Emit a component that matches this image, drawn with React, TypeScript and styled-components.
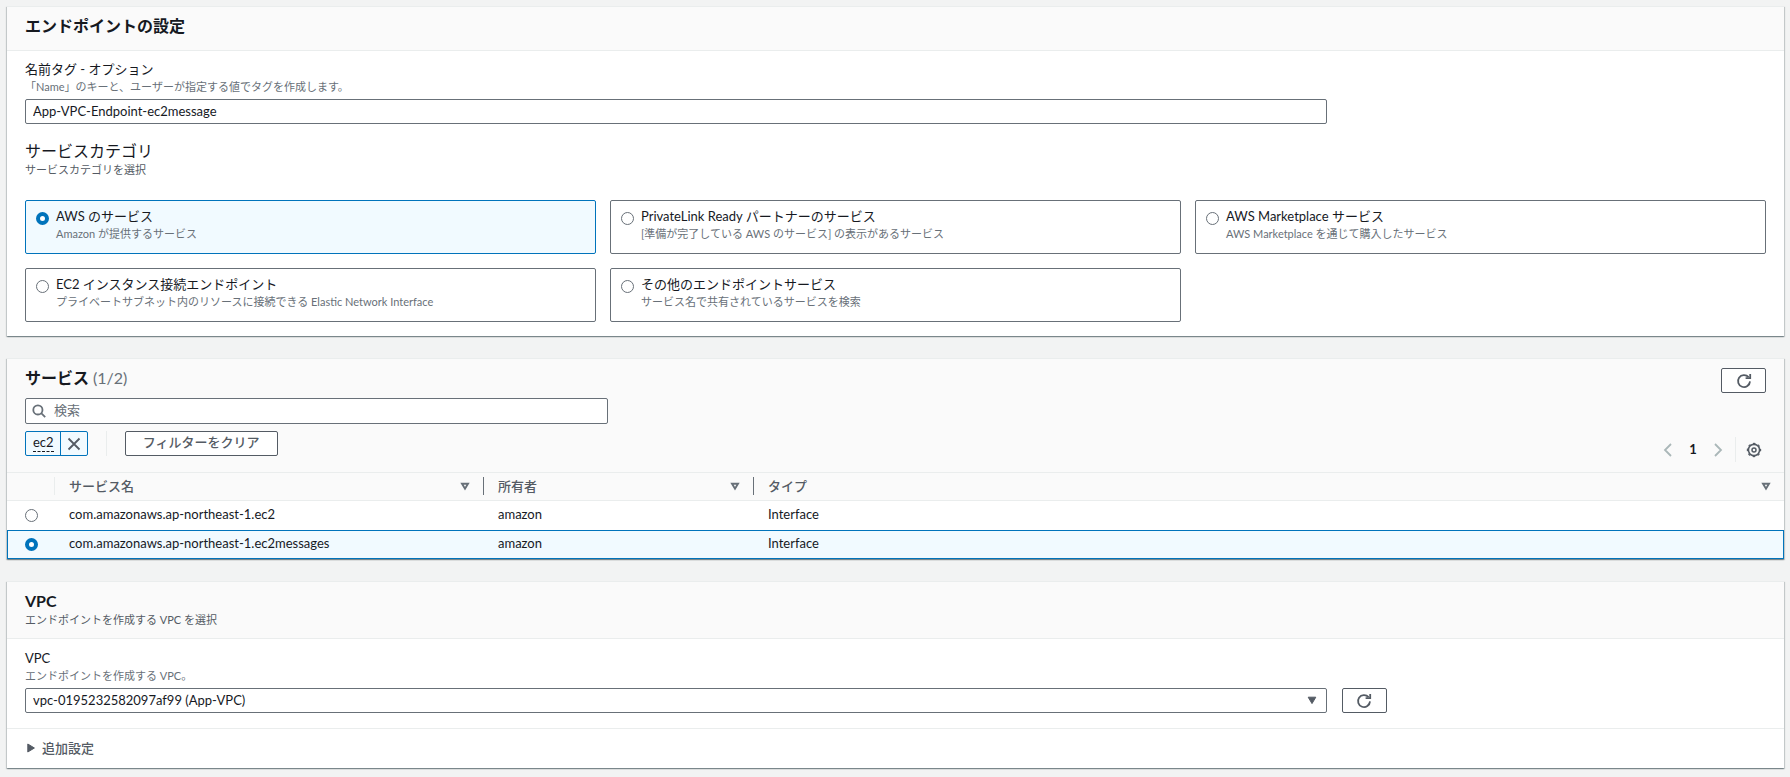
import React, { useState } from "react";
import styled, { createGlobalStyle } from "styled-components";

const GlobalStyle = createGlobalStyle`
  *, *::before, *::after { box-sizing: border-box; }
  body {
    margin: 0;
    background: #f2f3f3;
    color: #16191f;
    font-family: Lato, "Noto Sans CJK JP", sans-serif;
    font-size: 13px;
    line-height: 18px;
  }
  button, input, select { font: inherit; color: inherit; margin: 0; }
  h2, h3, p { margin: 0; }
`;

const Page = styled.main`
  display: flex;
  flex-direction: column;
  gap: 22px;
  padding: 6px 6px 8px 7px;
`;

const Panel = styled.section`
  background: #fff;
  border-top: 1px solid #eaeded;
  box-shadow: 0 1px 1px 0 rgba(0, 28, 36, 0.3), 1px 1px 1px 0 rgba(0, 28, 36, 0.15),
    -1px 1px 1px 0 rgba(0, 28, 36, 0.15);
`;

const PanelHeader = styled.header`
  min-height: 44px;
  padding: 8px 18px 10px;
  background: #fafafa;
  border-bottom: 1px solid #eaeded;
`;

const PanelTitle = styled.h2`
  font-size: 16px;
  line-height: 22px;
  font-weight: 700;
`;

const Counter = styled.span`
  color: #687078;
  font-weight: 400;
`;

const PanelBody = styled.div<{ $roomy?: boolean }>`
  padding: ${(p) => (p.$roomy ? "10px 18px 15px" : "9px 18px 14px")};
`;

const SubTitle = styled.h3`
  margin-top: 16px;
  font-size: 16px;
  line-height: 22px;
  font-weight: 400;
`;

const Hint = styled.p<{ $dark?: boolean }>`
  font-size: 11px;
  line-height: 16px;
  color: ${(p) => (p.$dark ? "#545b64" : "#687078")};
`;

const Field = styled.div`
  display: flex;
  flex-direction: column;
  gap: 1px;
`;

const FieldRow = styled.div`
  display: flex;
  gap: 15px;
  margin-top: 3px;
`;

const FieldSlot = styled.div`
  position: relative;
  width: calc(75% - 4px);
`;

const TextInput = styled.input`
  display: block;
  width: 100%;
  height: 25px;
  padding: 0 7px 2px;
  background: #fff;
  border: 1px solid #687078;
  border-radius: 2px;
`;

const Select = styled.select`
  display: block;
  width: 100%;
  height: 25px;
  padding: 0 28px 2px 7px;
  appearance: none;
  background: #fff;
  border: 1px solid #687078;
  border-radius: 2px;
`;

const SelectArrow = styled.svg`
  position: absolute;
  right: 10px;
  top: 8px;
  pointer-events: none;
`;

const Radio = styled.input.attrs({ type: "radio" })`
  appearance: none;
  display: block;
  flex: none;
  width: 13px;
  height: 13px;
  background: #fff;
  border: 1px solid #687078;
  border-radius: 50%;
  &:checked {
    border: 4px solid #0073bb;
  }
`;

const CardGrid = styled.div`
  display: grid;
  grid-template-columns: repeat(3, 1fr);
  gap: 14px;
  margin-top: 22px;
`;

const Card = styled.label<{ $selected: boolean }>`
  display: flex;
  gap: 7px;
  padding: 6px 10px 10px;
  background: ${(p) => (p.$selected ? "#f1faff" : "#fff")};
  border: 1px solid ${(p) => (p.$selected ? "#0073bb" : "#687078")};
  border-radius: 2px;
  ${Radio} { margin-top: 5px; }
`;

const CardText = styled.span`
  display: flex;
  flex-direction: column;
`;

const CardHint = styled.span`
  font-size: 11px;
  color: #687078;
`;

const Button = styled.button<{ $icon?: boolean }>`
  display: inline-flex;
  align-items: center;
  justify-content: center;
  flex: none;
  width: ${(p) => (p.$icon ? "45px" : "153px")};
  height: 25px;
  padding: 0 0 ${(p) => (p.$icon ? "0" : "3px")};
  background: #fff;
  border: 1px solid #545b64;
  border-radius: 2px;
  color: #545b64;
  font-weight: 500;
`;

const ToolHeader = styled.header`
  padding: 8px 18px 0;
  background: #fafafa;
`;

const HeaderRow = styled.div`
  display: flex;
  justify-content: space-between;
  height: 31px;
  ${Button} { margin-top: 1px; }
`;

const SearchBox = styled.div`
  display: flex;
  align-items: center;
  gap: 8px;
  width: 583px;
  max-width: 100%;
  height: 26px;
  padding: 0 6px;
  background: #fff;
  border: 1px solid #687078;
  border-radius: 2px;
`;

const SearchInput = styled.input`
  flex: 1;
  min-width: 0;
  height: 22px;
  padding: 0 0 2px;
  border: 0;
  outline: 0;
  background: transparent;
  &::placeholder { color: #687078; opacity: 1; }
`;

const ToolRow = styled.div`
  display: flex;
  justify-content: space-between;
  padding: 7px 0 10px;
`;

const Filters = styled.div`
  display: flex;
  align-items: flex-start;
  gap: 18px;
`;

const Divider = styled.span`
  width: 1px;
  height: 25px;
  background: #eaeded;
`;

const Token = styled.span`
  display: flex;
  height: 25px;
  background: #f1faff;
  border: 1px solid #0073bb;
  border-radius: 2px;
`;

const TokenLabel = styled.button`
  padding: 1px 6px 3px 7px;
  background: none;
  border: 0;
  border-right: 1px solid #0073bb;
  span {
    display: block;
    height: 19px;
    border-bottom: 1px dashed #16191f;
  }
`;

const PlainButton = styled.button<{ $muted?: boolean; $wide?: boolean }>`
  display: flex;
  align-items: center;
  justify-content: center;
  width: ${(p) => (p.$wide ? "26px" : "24px")};
  padding: 0;
  background: none;
  border: 0;
  color: ${(p) => (p.$muted ? "#aab7b8" : "#545b64")};
`;

const Pager = styled.nav`
  display: flex;
  align-items: stretch;
  height: 25px;
  margin-top: 6px;
`;

const PageButton = styled.button`
  width: 26px;
  padding: 0 0 2px;
  background: none;
  border: 0;
  font-weight: 700;
`;

const Preferences = styled.div`
  display: flex;
  margin-left: 5px;
  border-left: 1px solid #eaeded;
  padding-left: 6px;
`;

const Table = styled.table`
  width: 100%;
  table-layout: fixed;
  border-collapse: separate;
  border-spacing: 0;
  text-align: left;
`;

const Col = styled.col<{ $width?: number }>`
  width: ${(p) => (p.$width ? `${p.$width}px` : "auto")};
`;

const Th = styled.th`
  height: 29px;
  padding: 4px 0 5px;
  background: #fafafa;
  border: solid #eaeded;
  border-width: 1px 0;
  color: #545b64;
  font-weight: 500;
`;

const ThInner = styled.div<{ $line?: string; $last?: boolean }>`
  display: flex;
  align-items: center;
  justify-content: space-between;
  height: 18px;
  padding: 0 ${(p) => (p.$last ? "12px" : "13px")} 0 14px;
  border-right: 1px solid ${(p) => p.$line ?? "transparent"};
`;

const Td = styled.td<{ $selected: boolean }>`
  height: 29px;
  padding: 0 0 4px 14px;
  background: ${(p) => (p.$selected ? "#f1faff" : "#fff")};
  border: solid ${(p) => (p.$selected ? "#0073bb" : "transparent")};
  border-width: ${(p) => (p.$selected ? "1px 0" : "0")};
  &:first-child {
    padding-bottom: 0;
    padding-left: ${(p) => (p.$selected ? "17px" : "18px")};
    border-left-width: ${(p) => (p.$selected ? "1px" : "0")};
  }
  &:last-child { border-right-width: ${(p) => (p.$selected ? "1px" : "0")}; }
`;

const Expander = styled.button`
  display: flex;
  align-items: center;
  gap: 7px;
  width: 100%;
  height: 40px;
  padding: 0 20px 2px;
  background: none;
  border: 0;
  border-top: 1px solid #eaeded;
  color: #545b64;
  font-weight: 500;
`;

const RefreshIcon = () => (
  <svg width="16" height="16" viewBox="0 0 16 16" fill="none" stroke="currentColor" strokeWidth="1.8" aria-hidden="true">
    <path d="M14 8.4A6 6 0 1 1 12.6 4.2" />
    <path d="M9.6 5.2h4.6V1" />
  </svg>
);

const SearchIcon = () => (
  <svg width="14" height="14" viewBox="0 0 14 14" fill="none" stroke="#687078" strokeWidth="1.8" aria-hidden="true">
    <circle cx="5.9" cy="5.9" r="4.6" />
    <path d="M9.2 9.2l4 4" />
  </svg>
);

const CloseIcon = () => (
  <svg width="14" height="14" viewBox="0 0 14 14" fill="none" stroke="currentColor" strokeWidth="1.8" aria-hidden="true">
    <path d="M1.5 1.5l11 11M12.5 1.5l-11 11" />
  </svg>
);

const AngleIcon = ({ right }: { right?: boolean }) => (
  <svg width="10" height="14" viewBox="0 0 10 14" fill="none" stroke="currentColor" strokeWidth="1.8" aria-hidden="true">
    <path d={right ? "M2 1l6 6-6 6" : "M8 1L2 7l6 6"} />
  </svg>
);

const GearIcon = () => (
  <svg width="16" height="16" viewBox="0 0 16 16" fill="none" stroke="currentColor" aria-hidden="true">
    <circle cx="8" cy="8" r="5.6" strokeWidth="1.6" />
    <circle cx="8" cy="8" r="6.6" strokeWidth="1.2" strokeDasharray="2.59 2.59" strokeDashoffset="1.3" />
    <circle cx="8" cy="8" r="2" strokeWidth="1.5" />
  </svg>
);

const SortIcon = () => (
  <svg width="10" height="9" viewBox="0 0 10 9" fill="none" stroke="#687078" strokeWidth="1.9" aria-hidden="true">
    <path d="M2 1.7h6L5 6.7z" />
  </svg>
);

const categories = [
  { id: "aws", title: "AWS のサービス", hint: "Amazon が提供するサービス" },
  { id: "partner", title: "PrivateLink Ready パートナーのサービス", hint: "[準備が完了している AWS のサービス] の表示があるサービス" },
  { id: "marketplace", title: "AWS Marketplace サービス", hint: "AWS Marketplace を通じて購入したサービス" },
  { id: "eice", title: "EC2 インスタンス接続エンドポイント", hint: "プライベートサブネット内のリソースに接続できる Elastic Network Interface" },
  { id: "other", title: "その他のエンドポイントサービス", hint: "サービス名で共有されているサービスを検索" },
];

const services = [
  { name: "com.amazonaws.ap-northeast-1.ec2", owner: "amazon", type: "Interface" },
  { name: "com.amazonaws.ap-northeast-1.ec2messages", owner: "amazon", type: "Interface" },
];

export default function App() {
  const [category, setCategory] = useState("aws");
  const [service, setService] = useState(services[1].name);

  return (
    <>
      <GlobalStyle />
      <Page>
        <Panel>
          <PanelHeader>
            <PanelTitle>エンドポイントの設定</PanelTitle>
          </PanelHeader>
          <PanelBody>
            <Field>
              <label htmlFor="name-tag">名前タグ - オプション</label>
              <Hint>「Name」のキーと、ユーザーが指定する値でタグを作成します。</Hint>
              <FieldRow>
                <FieldSlot>
                  <TextInput id="name-tag" type="text" defaultValue="App-VPC-Endpoint-ec2message" />
                </FieldSlot>
              </FieldRow>
            </Field>
            <SubTitle>サービスカテゴリ</SubTitle>
            <Hint $dark>サービスカテゴリを選択</Hint>
            <CardGrid role="radiogroup" aria-label="サービスカテゴリ">
              {categories.map((c) => (
                <Card key={c.id} $selected={category === c.id}>
                  <Radio name="category" checked={category === c.id} onChange={() => setCategory(c.id)} />
                  <CardText>
                    <span>{c.title}</span>
                    <CardHint>{c.hint}</CardHint>
                  </CardText>
                </Card>
              ))}
            </CardGrid>
          </PanelBody>
        </Panel>

        <Panel>
          <ToolHeader>
            <HeaderRow>
              <PanelTitle>
                サービス <Counter>(1/2)</Counter>
              </PanelTitle>
              <Button type="button" $icon aria-label="更新"><RefreshIcon /></Button>
            </HeaderRow>
            <SearchBox>
              <SearchIcon />
              <SearchInput type="text" placeholder="検索" aria-label="検索" />
            </SearchBox>
            <ToolRow>
              <Filters>
                <Token>
                  <TokenLabel type="button"><span>ec2</span></TokenLabel>
                  <PlainButton type="button" $wide aria-label="フィルターを削除"><CloseIcon /></PlainButton>
                </Token>
                <Divider />
                <Button type="button">フィルターをクリア</Button>
              </Filters>
              <Pager aria-label="ページ">
                <PlainButton type="button" $muted aria-label="前へ"><AngleIcon /></PlainButton>
                <PageButton type="button">1</PageButton>
                <PlainButton type="button" $muted aria-label="次へ"><AngleIcon right /></PlainButton>
                <Preferences>
                  <PlainButton type="button" aria-label="設定"><GearIcon /></PlainButton>
                </Preferences>
              </Pager>
            </ToolRow>
          </ToolHeader>
          <Table>
            <colgroup>
              <Col $width={48} />
              <Col $width={429} />
              <Col $width={270} />
              <Col />
            </colgroup>
            <thead>
              <tr>
                <Th aria-label="選択"><ThInner $line="#eaeded" /></Th>
                <Th scope="col"><ThInner $line="#687078">サービス名<SortIcon /></ThInner></Th>
                <Th scope="col"><ThInner $line="#687078">所有者<SortIcon /></ThInner></Th>
                <Th scope="col"><ThInner $last>タイプ<SortIcon /></ThInner></Th>
              </tr>
            </thead>
            <tbody>
              {services.map((s) => {
                const selected = service === s.name;
                return (
                  <tr key={s.name}>
                    <Td $selected={selected}>
                      <Radio name="service" aria-label={s.name} checked={selected} onChange={() => setService(s.name)} />
                    </Td>
                    <Td $selected={selected}>{s.name}</Td>
                    <Td $selected={selected}>{s.owner}</Td>
                    <Td $selected={selected}>{s.type}</Td>
                  </tr>
                );
              })}
            </tbody>
          </Table>
        </Panel>

        <Panel>
          <PanelHeader>
            <PanelTitle>VPC</PanelTitle>
            <Hint $dark>エンドポイントを作成する VPC を選択</Hint>
          </PanelHeader>
          <PanelBody $roomy>
            <Field>
              <label htmlFor="vpc">VPC</label>
              <Hint>エンドポイントを作成する VPC。</Hint>
              <FieldRow>
                <FieldSlot>
                  <Select id="vpc">
                    <option>vpc-0195232582097af99 (App-VPC)</option>
                  </Select>
                  <SelectArrow width="10" height="9" viewBox="0 0 10 9" aria-hidden="true">
                    <path d="M1.2 1.2h7.6L5 7.6z" fill="#545b64" stroke="#545b64" strokeLinejoin="round" />
                  </SelectArrow>
                </FieldSlot>
                <Button type="button" $icon aria-label="更新"><RefreshIcon /></Button>
              </FieldRow>
            </Field>
          </PanelBody>
          <Expander type="button" aria-expanded="false">
            <svg width="8" height="10" viewBox="0 0 8 10" aria-hidden="true">
              <path d="M0.8 1v8L7.4 5z" fill="#545b64" stroke="#545b64" strokeLinejoin="round" />
            </svg>
            追加設定
          </Expander>
        </Panel>
      </Page>
    </>
  );
}
